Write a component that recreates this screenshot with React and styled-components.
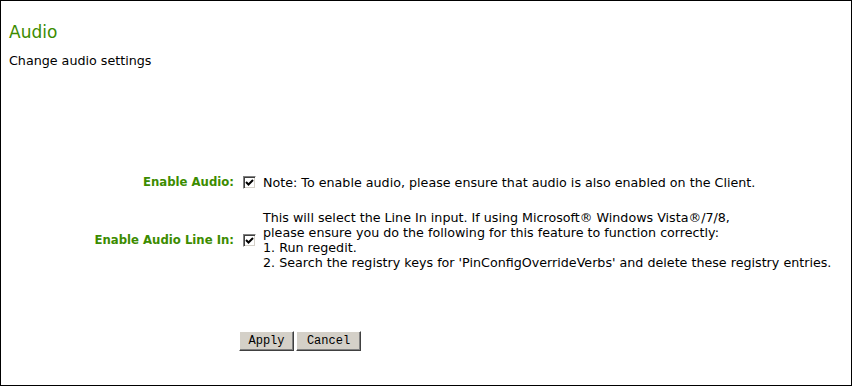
import React from "react";
import styled, { createGlobalStyle } from "styled-components";

const Global = createGlobalStyle`
  html, body { margin: 0; padding: 0; background: #fff; }
  body { font-family: "DejaVu Sans", Verdana, sans-serif; font-size: 12.7px; color: #000; }
`;

const Frame = styled.div`
  box-sizing: border-box;
  width: 852px;
  height: 386px;
  border: 1px solid #000;
  padding: 0 8px;
`;

const Title = styled.h1`
  margin: 21px 0 0;
  font-size: 17px;
  line-height: 20px;
  font-weight: normal;
  color: #3c8c00;
`;

const Subtitle = styled.p`
  margin: 11px 0 0;
  font-size: 12.7px;
  line-height: 15px;
`;

const Form = styled.div`
  display: grid;
  grid-template-columns: 225px 13px auto;
  column-gap: 9px;
  row-gap: 20px;
  align-items: center;
  margin-top: 107px;
`;

const Label = styled.div`
  text-align: right;
  font-weight: bold;
  font-size: 11.7px;
  color: #3c8c00;
  white-space: nowrap;
  line-height: 15px;
`;

const Box = styled.span`
  box-sizing: border-box;
  display: block;
  width: 13px;
  height: 13px;
  border-style: solid;
  border-width: 1px;
  border-color: #808080 #fff #fff #808080;
  box-shadow: inset 1px 1px 0 #404040, inset -1px -1px 0 #d4d0c8;
  background: #fff;
  position: relative;
  svg { position: absolute; left: 1px; top: 1px; }
`;

const Text = styled.div`
  margin-left: -2px;
  line-height: 15px;
  white-space: nowrap;
`;

const Buttons = styled.div`
  display: flex;
  gap: 2px;
  margin: 61px 0 0 230px;
`;

const Button = styled.button`
  box-sizing: border-box;
  height: 20px;
  width: ${(p) => p.$w}px;
  padding: 0;
  font-family: "Liberation Mono", "Courier New", monospace;
  font-size: 12px;
  color: #000;
  background: #d4d0c8;
  border-style: solid;
  border-width: 1px;
  border-color: #fff #404040 #404040 #fff;
  box-shadow: inset -1px -1px 0 #808080;
`;

const Check = () => (
  <Box>
    <svg width="9" height="9" viewBox="0 0 9 9">
      <path d="M1 3 L3.5 5.5 L8 1" fill="none" stroke="#000" strokeWidth="2" transform="translate(0,1)" />
    </svg>
  </Box>
);

export default function App() {
  return (
    <>
      <Global />
      <Frame>
        <Title>Audio</Title>
        <Subtitle>Change audio settings</Subtitle>
        <Form>
          <Label>Enable Audio:</Label>
          <Check />
          <Text>Note: To enable audio, please ensure that audio is also enabled on the Client.</Text>
          <Label>Enable Audio Line In:</Label>
          <Check />
          <Text>
            This will select the Line In input. If using Microsoft® Windows Vista®/7/8,
            <br />
            please ensure you do the following for this feature to function correctly:
            <br />
            1. Run regedit.
            <br />
            2. Search the registry keys for 'PinConfigOverrideVerbs' and delete these registry entries.
          </Text>
        </Form>
        <Buttons>
          <Button $w={55}>Apply</Button>
          <Button $w={65}>Cancel</Button>
        </Buttons>
      </Frame>
    </>
  );
}
